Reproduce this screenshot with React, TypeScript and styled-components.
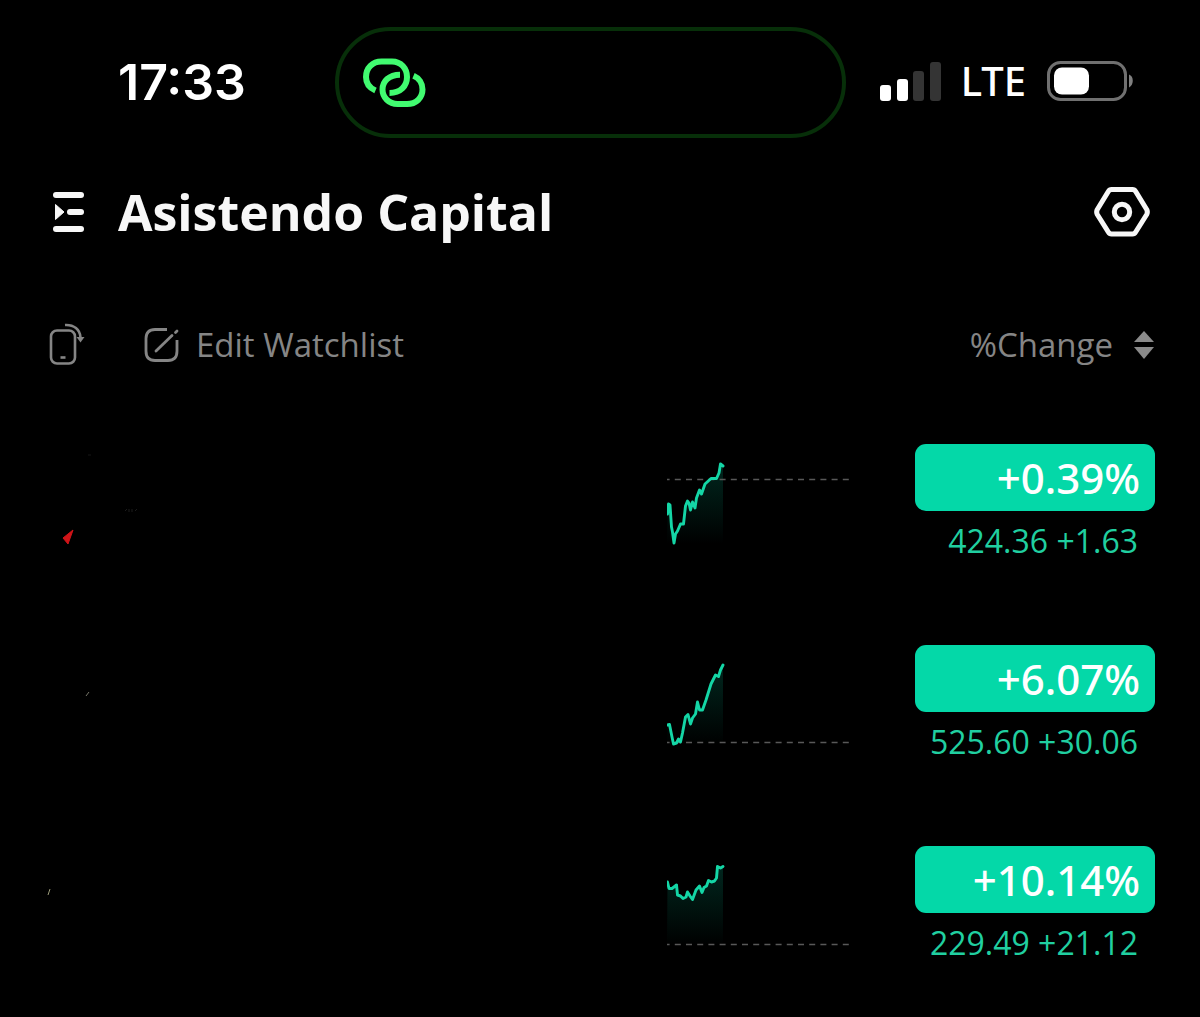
import React from 'react';
import styled, { createGlobalStyle } from 'styled-components';

type Point = [number, number];

interface Mark {
  path: string;
  color: string;
}

interface Quote {
  id: string;
  change: string;
  price: string;
  baseline: number;
  points: Point[];
  marks: Mark[];
}

const quotes: Quote[] = [
  {
    id: 'first',
    change: '+0.39%',
    price: '424.36 +1.63',
    baseline: 35,
    points: [
      [0.5, 70], [1.5, 60], [3, 61], [4.5, 83], [5.5, 88], [7, 99], [8.5, 90], [10.5, 87], [13.5, 80],
      [16.5, 80], [18.5, 62], [20.5, 57], [22, 59], [23.5, 66], [25.5, 58], [28, 64], [29.5, 54],
      [32.5, 46], [34.5, 50], [38, 40], [44, 34.5], [49.5, 34.5], [52, 29], [53.5, 20], [56, 22],
    ],
    marks: [
      { path: 'M18 94 L28 86 L23 100 Z', color: '#d01418' },
      { path: 'M80 67 L82 65 M84 68 V65 M87 68 V65 M90 67 L92 65', color: '#1c1c1c' },
      { path: 'M43 11 H46', color: '#161616' },
    ],
  },
  {
    id: 'second',
    change: '+6.07%',
    price: '525.60 +30.06',
    baseline: 97,
    points: [
      [0.5, 80], [2.5, 79.5], [5, 92], [6.5, 99], [9.5, 98], [11.5, 94], [13.5, 97], [15.5, 88],
      [18.5, 72], [21, 69.5], [23.5, 79], [25.5, 73], [28.5, 69], [30.5, 57], [32.5, 65], [35.5, 65],
      [39, 55], [41.5, 47], [44, 39], [48.5, 30], [51.5, 31.5], [53.5, 25], [56, 20],
    ],
    marks: [{ path: 'M41 51 L44 47', color: '#77776a' }],
  },
  {
    id: 'third',
    change: '+10.14%',
    price: '229.49 +21.12',
    baseline: 98,
    points: [
      [0.5, 36], [2, 42.5], [5, 42.5], [9.5, 39], [10.5, 49], [13.5, 50], [16, 52.5], [19, 51],
      [20.5, 46], [23, 50], [25.5, 53.5], [29, 44], [32.5, 40], [35, 46.5], [37, 41.5], [39.5, 40],
      [41.5, 34.5], [44.5, 36], [47.5, 35], [49.5, 32], [50.5, 20.5], [53.5, 22], [56, 20.5],
    ],
    marks: [{ path: 'M3 49 L5 43', color: '#9a9a78' }],
  },
];

const Sparkline: React.FC<{ quote: Quote }> = ({ quote }) => {
  const line = quote.points.map(([x, y]) => `${x},${y}`).join(' ');
  const gradientId = `fill-${quote.id}`;

  return (
    <Chart width='182' height='120' viewBox='0 0 182 120' aria-hidden='true'>
      <defs>
        <linearGradient id={gradientId} gradientUnits='userSpaceOnUse' x1='0' y1='20' x2='0' y2='100'>
          <stop offset='0' stopColor='#04d8a8' stopOpacity='0.18' />
          <stop offset='1' stopColor='#04d8a8' stopOpacity='0' />
        </linearGradient>
      </defs>

      <polygon points={`0,100 ${line} 56,100`} fill={`url(#${gradientId})`} />
      <path
        d={`M0 ${quote.baseline + 0.5} H182`}
        stroke='#585858'
        strokeWidth='1.3'
        strokeDasharray='6 5.2'
        strokeDashoffset='3.4'
      />
      <polyline points={line} fill='none' stroke='#14d6a6' strokeWidth='2.9' strokeLinejoin='round' strokeLinecap='round' />
    </Chart>
  );
};

const QuoteRow: React.FC<{ quote: Quote }> = ({ quote }) => (
  <Row>
    <Marks width='120' height='120' viewBox='0 0 120 120' aria-hidden='true'>
      {quote.marks.map(({ path, color }) => (
        <path key={path} d={path} fill={color} stroke={color} />
      ))}
    </Marks>

    <Sparkline quote={quote} />

    <Figures>
      <ChangeButton type='button'>{quote.change}</ChangeButton>

      <Price>{quote.price}</Price>
    </Figures>
  </Row>
);

const App: React.FC = () => {
  return (
    <>
      <GlobalStyle />

      <StatusBar>
        <Time>17:33</Time>

        <Island>
          <svg width='64' height='50' viewBox='0 0 64 50' fill='none' stroke='#41fb70' strokeWidth='6' aria-hidden='true'>
            <path d='M12.500 32.500 C6.500 30 3 25 3 19 C3 10 9.500 3.500 18.500 3.500 H29 C38 3.500 44 10.500 44 19 C44 28 37.500 35 26.500 35' />
            <path d='M37 16.700 C26 16.700 19.500 23.500 19.500 31.500 C19.500 39.500 26 46 34.500 46 H44 C53 46 59.500 40 59.500 31.500 C59.500 25.500 56 20 50.500 17.700' />
          </svg>
        </Island>

        <Indicators>
          <svg width='61' height='40' viewBox='0 0 61 40' aria-hidden='true'>
            <rect x='0' y='24' width='11' height='16' rx='3' fill='#fff' />
            <rect x='17' y='18' width='11' height='22' rx='3' fill='#fff' />
            <rect x='33' y='10' width='11' height='30' rx='3' fill='#343434' />
            <rect x='50' y='1' width='11' height='39' rx='3' fill='#343434' />
          </svg>

          <Network>LTE</Network>

          <svg width='88' height='42' viewBox='0 0 88 42' aria-hidden='true'>
            <rect x='2.500' y='2.500' width='77' height='37' rx='12' fill='none' stroke='#707070' strokeWidth='3' />
            <rect x='8' y='7.500' width='35' height='27' rx='8' fill='#fff' />
            <path d='M83 14.500 C88 16 88 25 83 27.500 Z' fill='#808080' />
          </svg>
        </Indicators>
      </StatusBar>

      <Header>
        <IconButton type='button' aria-label='Open menu'>
          <svg width='32' height='40' viewBox='0 0 32 40' fill='#f7f7f7' aria-hidden='true'>
            <rect x='0' y='0' width='31' height='6' rx='3' />
            <rect x='14' y='17' width='17' height='6' rx='3' />
            <rect x='0' y='34' width='31' height='6' rx='3' />
            <path d='M2.500 12.500 L11 20 L2.500 27.500 Z' stroke='#f7f7f7' strokeLinejoin='round' />
          </svg>
        </IconButton>

        <Title>Asistendo Capital</Title>

        <IconButton type='button' aria-label='Settings'>
          <svg width='58' height='52' viewBox='0 0 58 52' fill='none' stroke='#f7f7f7' strokeWidth='5' aria-hidden='true'>
            <path
              d='M18.500 3.500 H39.500 Q41.500 3.500 42.700 5.500 L53.700 23.500 Q55 26 53.700 28.500 L42.700 46 Q41.500 48 39.500 48 H18.500 Q16.500 48 15.300 46 L4.300 28.500 Q3 26 4.300 23.500 L15.300 5.500 Q16.500 3.500 18.500 3.500 Z'
              strokeLinejoin='round'
            />
            <circle cx='29' cy='26' r='7.700' />
          </svg>
        </IconButton>
      </Header>

      <Toolbar>
        <IconButton type='button' aria-label='Rotate screen'>
          <svg width='36' height='44' viewBox='0 0 36 44' fill='none' stroke='#858585' strokeWidth='2.600' aria-hidden='true'>
            <rect x='2' y='7.500' width='24' height='33' rx='6' />
            <path d='M11.500 34.500 H16.500' />
            <path d='M16 2 C25 1.500 31 6.500 31.500 14.500' />
            <path d='M27.500 14 H35.500 L31.500 19.500 Z' fill='#858585' stroke='none' />
          </svg>
        </IconButton>

        <EditButton type='button'>
          <svg width='36' height='36' viewBox='0 0 36 36' fill='none' stroke='#858585' strokeWidth='2.800' aria-hidden='true'>
            <path d='M23 2.500 H11 Q2 2.500 2 11.500 V24 Q2 33.500 11 33.500 H24 Q33 33.500 33 24 V13' />
            <path d='M12 24 L28 8.500' strokeLinecap='round' />
            <path d='M31.500 5.500 L33 4' strokeLinecap='round' />
          </svg>
          Edit Watchlist
        </EditButton>

        <SortButton type='button'>
          %Change
          <svg width='20' height='30' viewBox='0 0 20 30' fill='#8a8a8a' aria-hidden='true'>
            <path d='M0 12 L10 1 L20 12 Z' />
            <path d='M0 17 H20 L10 29 Z' />
          </svg>
        </SortButton>
      </Toolbar>

      <List>
        {quotes.map((quote) => (
          <QuoteRow key={quote.id} quote={quote} />
        ))}
      </List>
    </>
  );
};

const GlobalStyle = createGlobalStyle`
  * {
    box-sizing: border-box;
  }

  body {
    margin: 0;
    background-color: #000;
    color: #f7f7f7;
    font-family: 'Open Sans', 'Noto Sans', sans-serif;
  }

  button {
    padding: 0;
    border: none;
    background: none;
    color: inherit;
    font: inherit;
    cursor: pointer;
  }

  svg {
    display: block;
    flex-shrink: 0;
  }
`;

const StatusBar = styled.div`
  display: grid;
  grid-template-columns: 1fr minmax(0, 511px) 1fr;
  align-items: center;
  padding: 27px 66px 0 46px;
`;

const Time = styled.span`
  padding: 0 0 2px 72px;
  color: #fff;
  font-family: Inter, sans-serif;
  font-size: 50px;
  font-weight: 600;
  line-height: 56px;
`;

const Island = styled.div`
  display: flex;
  align-items: center;
  height: 111px;
  padding-left: 24px;
  border: 4px solid #072f09;
  border-radius: 56px;
`;

const Indicators = styled.div`
  display: flex;
  align-items: center;
  justify-content: flex-end;
  gap: 20px;
  padding-bottom: 4px;
`;

const Network = styled.span`
  color: #fff;
  font-family: 'Noto Sans', sans-serif;
  font-size: 40px;
  font-weight: 500;
  line-height: 48px;
`;

const Header = styled.header`
  display: flex;
  align-items: center;
  margin-top: 38px;
  padding: 0 49px 0 53px;
`;

const IconButton = styled.button`
  flex-shrink: 0;
`;

const Title = styled.h1`
  flex: 1;
  margin: 0;
  padding-left: 33px;
  font-size: 50px;
  font-weight: 700;
  line-height: 72px;
`;

const Toolbar = styled.div`
  display: flex;
  align-items: center;
  margin-top: 72px;
  padding: 0 46px 0 49px;
  color: #858585;
  font-size: 33px;
  font-weight: 400;
  line-height: 50px;
`;

const EditButton = styled.button`
  display: flex;
  align-items: center;
  gap: 16px;
  margin-left: 59px;
`;

const SortButton = styled.button`
  display: flex;
  align-items: center;
  gap: 21px;
  margin-left: auto;
`;

const List = styled.ul`
  margin: 0;
  padding: 74px 45px 0;
  list-style: none;
`;

const Row = styled.li`
  display: flex;
  align-items: flex-start;
  height: 201px;
`;

const Marks = styled.svg`
  margin-right: auto;
`;

const Chart = styled.svg`
  margin-right: 66px;
`;

const Figures = styled.div`
  flex: 0 0 240px;
  text-align: right;
`;

const ChangeButton = styled.button`
  display: block;
  width: 100%;
  height: 67px;
  padding-right: 15px;
  border-radius: 11px;
  background-color: #04d8a8;
  color: #fff;
  font-family: 'Noto Sans', sans-serif;
  font-size: 42px;
  font-weight: 500;
  text-align: right;
`;

const Price = styled.div`
  padding: 6px 17px 0 0;
  color: #20cfa0;
  font-size: 32px;
  font-weight: 400;
  line-height: 48px;
`;

export default App;
